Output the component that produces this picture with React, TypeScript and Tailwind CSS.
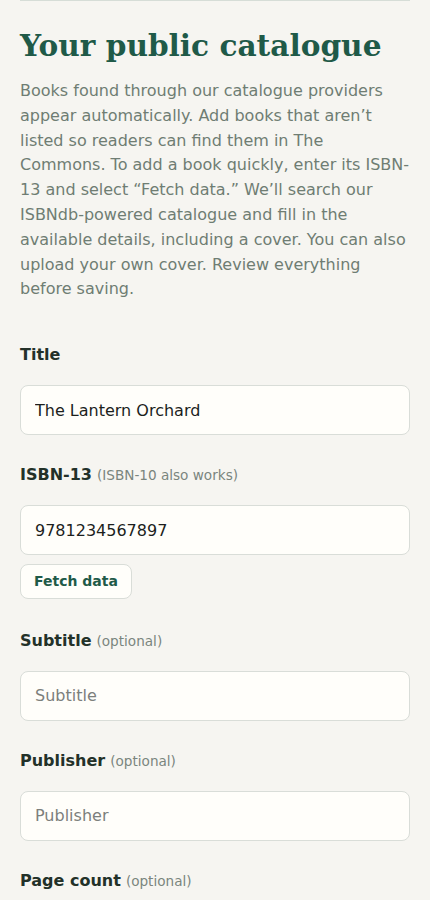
import React from "react";

function Field({
  label,
  hint,
  value,
  placeholder,
}: {
  label: string;
  hint?: string;
  value?: string;
  placeholder?: string;
}) {
  return (
    <div className="mt-[28px]">
      <label className="block text-[16px] leading-[24px] font-bold text-[#233129]">
        {label}
        {hint && <span className="ml-[5px] text-[13.6px] font-normal text-[#7a857e]">{hint}</span>}
      </label>
      <input
        className="mt-[18px] block h-[50px] w-full rounded-[8px] border border-[#d9ddd8] bg-[#fffefa] px-[14px] text-[16px] text-[#1c1f1d] placeholder:text-[#7c7f7c] outline-none"
        defaultValue={value}
        placeholder={placeholder}
      />
    </div>
  );
}

export default function App() {
  return (
    <div
      className="min-h-[900px] bg-[#f6f5f1] px-5"
      style={{ fontFamily: '"DejaVu Sans", Verdana, sans-serif' }}
    >
      <div className="border-t border-[#d6ddd7]" />
      <h1
        className="mt-[23px] text-[29.6px] leading-[44px] font-bold whitespace-nowrap text-[#1f5a48]"
        style={{ fontFamily: '"DejaVu Serif", Georgia, serif' }}
      >
        Your public catalogue
      </h1>
      <p className="mt-[11px] text-[16px] leading-[24.8px] text-[#6f7d73]">
        Books found through our catalogue providers appear automatically. Add books that aren’t
        listed so readers can find them in The Commons. To add a book quickly, enter its ISBN-13
        and select “Fetch data.” We’ll search our ISBNdb-powered catalogue and fill in the
        available details, including a cover. You can also upload your own cover. Review
        everything before saving.
      </p>

      <div className="pt-[13px]">
        <Field label="Title" value="The Lantern Orchard" />
        <Field label="ISBN-13" hint="(ISBN-10 also works)" value="9781234567897" />
        <div className="mt-[9px] pb-[1.5px]">
          <button className="h-[35px] rounded-[8px] border border-[#d9ddd8] bg-[#fffefa] px-[13px] text-[14px] font-bold text-[#1f5a48]">
            Fetch data
          </button>
        </div>
        <Field label="Subtitle" hint="(optional)" placeholder="Subtitle" />
        <Field label="Publisher" hint="(optional)" placeholder="Publisher" />
        <Field label="Page count" hint="(optional)" placeholder="Page count" />
      </div>
    </div>
  );
}
